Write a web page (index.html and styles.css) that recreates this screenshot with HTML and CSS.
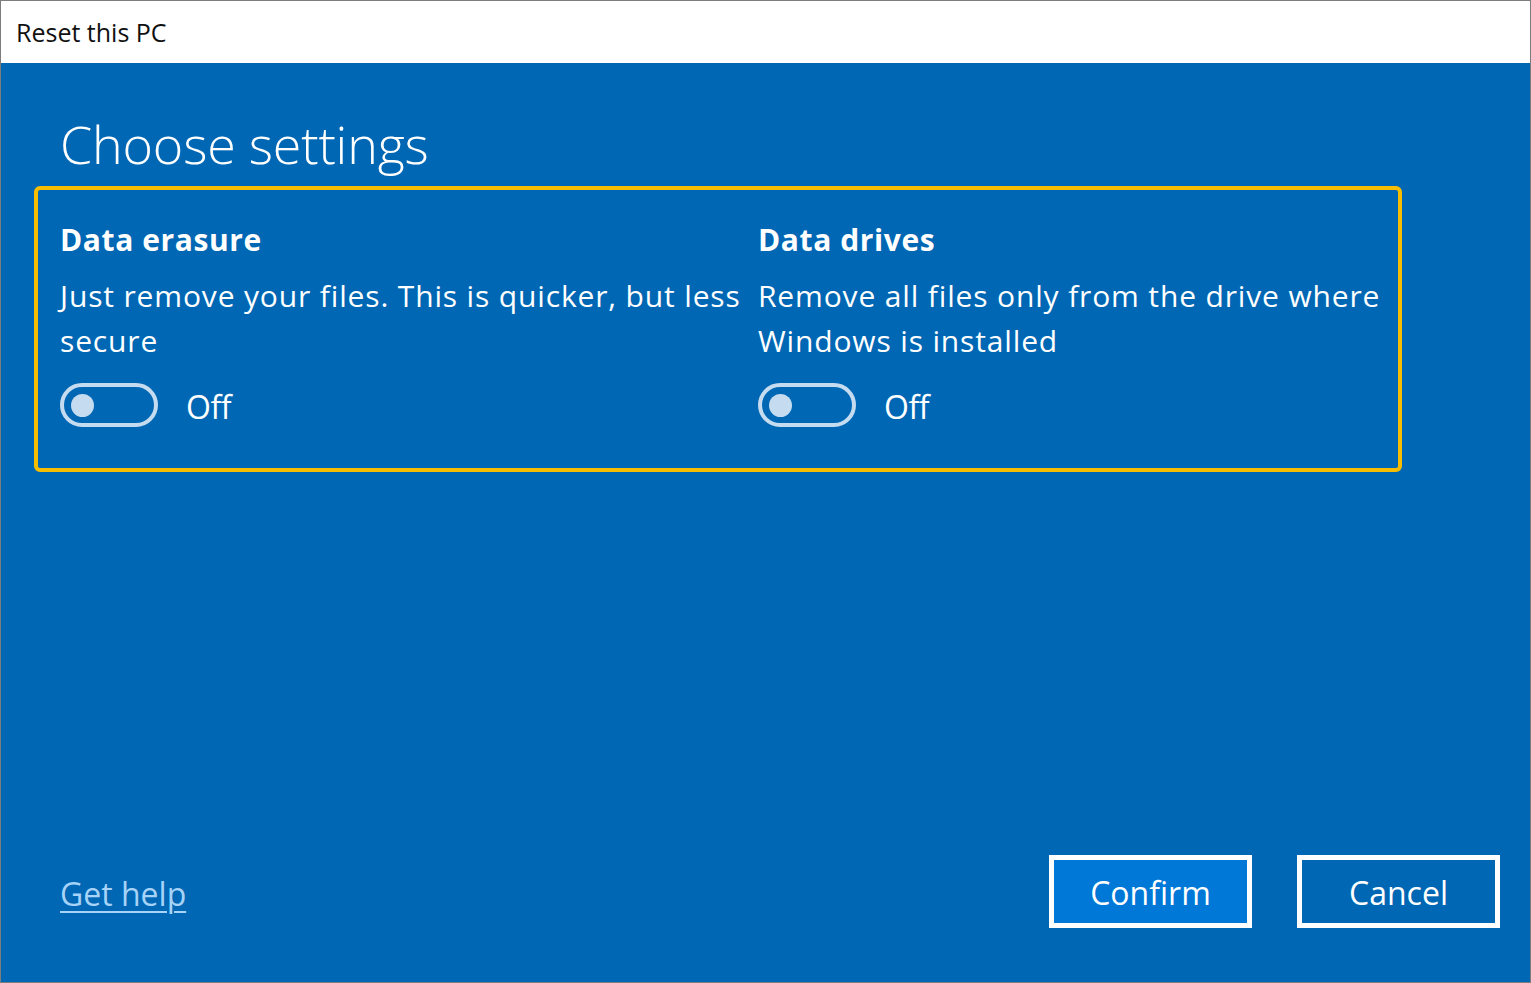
FILE: index.html
```html
<!DOCTYPE html>
<html lang="en">
<head>
<meta charset="utf-8">
<title>Reset this PC</title>
<link rel="stylesheet" href="styles.css">
</head>
<body>
<div class="window">
  <div class="titlebar">Reset this PC</div>
  <div class="content">
    <h1 class="heading">Choose settings</h1>
    <div class="options">
      <div class="option">
        <div class="option-title">Data erasure</div>
        <div class="option-desc">Just remove your files. This is quicker, but less secure</div>
        <div class="toggle-row">
          <span class="toggle"><span class="knob"></span></span>
          <span class="toggle-label">Off</span>
        </div>
      </div>
      <div class="option">
        <div class="option-title">Data drives</div>
        <div class="option-desc">Remove all files only from the drive where Windows is installed</div>
        <div class="toggle-row">
          <span class="toggle"><span class="knob"></span></span>
          <span class="toggle-label">Off</span>
        </div>
      </div>
    </div>
    <div class="spacer"></div>
    <div class="footer">
      <a class="help" href="#">Get help</a>
      <div class="buttons">
        <button class="btn btn-primary">Confirm</button>
        <button class="btn">Cancel</button>
      </div>
    </div>
  </div>
</div>
</body>
</html>
```
FILE: styles.css
```css
* { box-sizing: border-box; }
html, body { margin: 0; padding: 0; }
body {
  width: 1531px;
  height: 983px;
  font-family: "Open Sans", "Noto Sans", sans-serif;
  background: #ffffff;
}
.window {
  width: 1531px;
  height: 983px;
  border: 1px solid #7d7d7d;
  display: flex;
  flex-direction: column;
}
.titlebar {
  height: 62px;
  background: #ffffff;
  color: #111111;
  font-size: 25px;
  line-height: 62px;
  padding-left: 15px;
}
.content {
  flex: 1;
  background: #0067b4;
  color: #ffffff;
  display: flex;
  flex-direction: column;
  padding: 0 30px 54px 33px;
}
.heading {
  margin: 43px 0 0 26px;
  font-size: 52px;
  font-weight: 300;
  line-height: 76px;
  letter-spacing: -0.2px;
}
.options {
  margin-top: 4px;
  width: 1368px;
  height: 286px;
  border: 4px solid #f7bd00;
  border-radius: 6px;
  padding: 30px 0 0 22px;
  display: grid;
  grid-template-columns: 698px 1fr;
}
.option-title {
  font-size: 30px;
  font-weight: 700;
  line-height: 40px;
  letter-spacing: 0.6px;
}
.option-desc {
  margin-top: 13px;
  font-size: 30px;
  line-height: 45px;
  letter-spacing: 0.85px;
  padding-right: 4px;
}
.toggle-row {
  margin-top: 20px;
  display: flex;
  align-items: flex-start;
  gap: 28px;
}
.toggle {
  width: 98px;
  height: 44px;
  border: 4px solid #c5dcf0;
  border-radius: 22px;
  display: flex;
  align-items: center;
  padding-left: 7px;
}
.knob {
  width: 23px;
  height: 23px;
  border-radius: 50%;
  background: #c5dcf0;
}
.toggle-label {
  font-size: 32px;
  line-height: 44px;
  margin-top: 2px;
  letter-spacing: -0.5px;
}
.spacer { flex: 1; }
.footer {
  display: flex;
  align-items: center;
  justify-content: space-between;
  padding-left: 26px;
}
.help {
  color: #a6d3f7;
  font-size: 32px;
  margin-top: 4px;
  text-decoration: underline;
  text-underline-offset: 5px;
  text-decoration-thickness: 2px;
}
.buttons {
  display: flex;
  gap: 45px;
}
.btn {
  width: 203px;
  height: 73px;
  border: 5px solid #ffffff;
  background: #0067b4;
  color: #ffffff;
  font-family: "Open Sans", "Noto Sans", sans-serif;
  font-size: 32px;
  padding: 2px 0 0 0;
}
.btn-primary {
  background: #0078d7;
}
```
